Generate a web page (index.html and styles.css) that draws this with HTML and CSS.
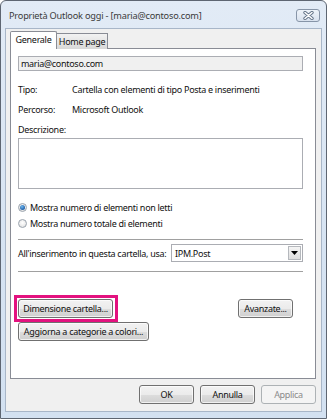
FILE: index.html
```html
<!DOCTYPE html>
<html lang="it">
<head>
<meta charset="utf-8">
<title>Proprietà Outlook oggi</title>
<link rel="stylesheet" href="styles.css">
</head>
<body>
<div class="window">
  <div class="titlebar">
    <span class="title">Proprietà Outlook oggi - [maria@contoso.com]</span>
    <span class="close">
      <svg width="11" height="9" viewBox="0 0 11 9"><path d="M2 1.5 L9 7.5 M9 1.5 L2 7.5" stroke="#66768a" stroke-width="3.4" stroke-linecap="round"/><path d="M2 1.5 L9 7.5 M9 1.5 L2 7.5" stroke="#ffffff" stroke-width="1.5" stroke-linecap="round"/></svg>
    </span>
  </div>
  <div class="client">
    <div class="tabs">
      <div class="tab active">Generale</div>
      <div class="tab">Home page</div>
    </div>
    <div class="panel">
      <div class="field readonly">maria@contoso.com</div>
      <div class="info">
        <span class="lbl">Tipo:</span><span>Cartella con elementi di tipo Posta e inserimenti</span>
      </div>
      <div class="info second">
        <span class="lbl">Percorso:</span><span>Microsoft Outlook</span>
      </div>
      <div class="desc-label">Descrizione:</div>
      <div class="textarea"></div>
      <div class="radio-row first"><span class="radio on"></span>Mostra numero di elementi non letti</div>
      <div class="radio-row"><span class="radio"></span>Mostra numero totale di elementi</div>
      <div class="sep"></div>
      <div class="combo-row">
        <span>All'inserimento in questa cartella, usa:</span>
        <div class="combo"><span>IPM.Post</span><span class="drop"><svg width="7" height="4" viewBox="0 0 7 4"><path d="M0 0 H7 L3.5 4 Z" fill="#000"/></svg></span></div>
      </div>
      <div class="sep second"></div>
      <div class="btn-row">
        <button class="btn highlight w-dim">Dimensione cartella...</button>
        <button class="btn w-av">Avanzate...</button>
      </div>
      <button class="btn w-agg">Aggiorna a categorie a colori...</button>
    </div>
    <div class="footer">
      <button class="btn w-ft">OK</button>
      <button class="btn w-ft">Annulla</button>
      <button class="btn w-ft disabled">Applica</button>
    </div>
  </div>
</div>
</body>
</html>
```
FILE: styles.css
```css
html, body {
  margin: 0;
  padding: 0;
  background: #ffffff;
}
body {
  font-family: "Noto Sans", "Open Sans", sans-serif;
  font-size: 9px;
  letter-spacing: -0.3px;
  color: #111111;
}
.window {
  width: 327px;
  height: 419px;
  box-sizing: border-box;
  border: 1px solid #5e6672;
  border-radius: 6px 6px 0 0;
  background: linear-gradient(#e2ebf6, #d6e3f2 60%, #d3e1f1);
  padding: 0 4px 6px 4px;
  display: flex;
  flex-direction: column;
}
.titlebar {
  height: 27px;
  display: flex;
  align-items: flex-start;
  justify-content: space-between;
  padding: 0 2px 0 4px;
}
.title {
  font-size: 9.2px;
  letter-spacing: -0.2px;
  color: #3a3a3a;
  line-height: 12px;
  margin-top: 9px;
}
.close {
  width: 22px;
  height: 11px;
  border: 1px solid #8795a8;
  border-radius: 3px;
  background: linear-gradient(#eef3f9, #d9e2ee);
  display: flex;
  align-items: center;
  justify-content: center;
  margin-top: 8px;
}
.client {
  flex: 1;
  background: #f0f0f0;
  border: 1px solid #a8b6c8;
  padding: 2px 5px 0 4px;
  display: flex;
  flex-direction: column;
}
.tabs {
  display: flex;
  align-items: flex-end;
  height: 18px;
  position: relative;
  z-index: 1;
  margin-bottom: -1px;
}
.tab {
  height: 16px;
  box-sizing: border-box;
  border: 1px solid #898c95;
  border-bottom: none;
  border-left: none;
  background: linear-gradient(#f2f2f2, #e6e6e6 50%, #d8d8d8);
  width: 51px;
  text-align: center;
  line-height: 15px;
}
.tab.active {
  height: 18px;
  width: 47px;
  background: #ffffff;
  border-left: 1px solid #898c95;
  border-radius: 2px 2px 0 0;
  line-height: 16px;
}
.panel {
  height: 331px;
  box-sizing: border-box;
  background: #ffffff;
  border: 1px solid #898c95;
  padding: 7px 12px 0 7px;
  display: flex;
  flex-direction: column;
}
.field {
  height: 15px;
  box-sizing: border-box;
  border: 1px solid #abadb3;
  padding-left: 2px;
  line-height: 13px;
}
.readonly {
  background: #f0f0f0;
}
.info {
  display: flex;
  height: 14px;
  line-height: 14px;
  margin-top: 12px;
}
.info.second {
  margin-top: 6px;
}
.lbl {
  width: 54px;
  flex: none;
}
.desc-label {
  height: 14px;
  line-height: 14px;
  margin-top: 6px;
}
.textarea {
  height: 51px;
  box-sizing: border-box;
  border: 1px solid #abadb3;
  margin-top: 1px;
}
.radio-row {
  display: flex;
  align-items: center;
  height: 14px;
  margin-top: 2px;
}
.radio-row.first {
  margin-top: 11px;
}
.radio {
  width: 9px;
  height: 9px;
  box-sizing: border-box;
  border-radius: 50%;
  border: 1px solid #9aa3ad;
  background: radial-gradient(circle at 50% 40%, #ffffff, #dcdcdc);
  margin-right: 3px;
  display: flex;
  align-items: center;
  justify-content: center;
}
.radio.on::after {
  content: "";
  width: 5px;
  height: 5px;
  border-radius: 50%;
  background: radial-gradient(circle at 40% 35%, #6fb8f0, #1f5fa8 70%);
}
.sep {
  height: 1px;
  background: #a0a0a0;
  margin-top: 9px;
}
.combo-row {
  display: flex;
  align-items: center;
  justify-content: space-between;
  height: 18px;
  margin-top: 4px;
}
.combo {
  width: 132px;
  height: 18px;
  box-sizing: border-box;
  border: 1px solid #abadb3;
  display: flex;
  align-items: center;
  justify-content: space-between;
  padding: 0 1px 0 3px;
}
.drop {
  width: 13px;
  height: 14px;
  box-sizing: border-box;
  border: 1px solid #b5b8bd;
  background: linear-gradient(#f4f4f4, #dedede);
  display: flex;
  align-items: center;
  justify-content: center;
}
.sep.second {
  margin-top: 9px;
}
.btn {
  font-family: inherit;
  font-size: 9px;
  letter-spacing: -0.3px;
  color: #111111;
  height: 19px;
  box-sizing: border-box;
  border: 1px solid #707070;
  border-radius: 3px;
  background: linear-gradient(#f2f2f2, #ebebeb 50%, #dddddd 51%, #cfcfcf);
  box-shadow: inset 0 0 0 1px rgba(255,255,255,0.7);
  padding: 0;
  margin: 0;
}
.btn-row {
  display: flex;
  justify-content: space-between;
  margin-top: 27px;
  padding-right: 10px;
}
.highlight {
  position: relative;
}
.highlight::after {
  content: "";
  position: absolute;
  left: -5px;
  top: -5px;
  right: -6px;
  bottom: -5px;
  border: 3px solid #e3127f;
}
.w-dim { width: 95px; }
.w-av { width: 55px; }
.w-agg { width: 131px; margin-top: 4px; }
.footer {
  display: flex;
  justify-content: flex-end;
  gap: 6px;
  margin-top: 6px;
}
.w-ft { width: 55px; }
.btn.disabled {
  color: #8a8a8a;
  border-color: #adb2b5;
  background: #f4f4f4;
  box-shadow: none;
}
```
